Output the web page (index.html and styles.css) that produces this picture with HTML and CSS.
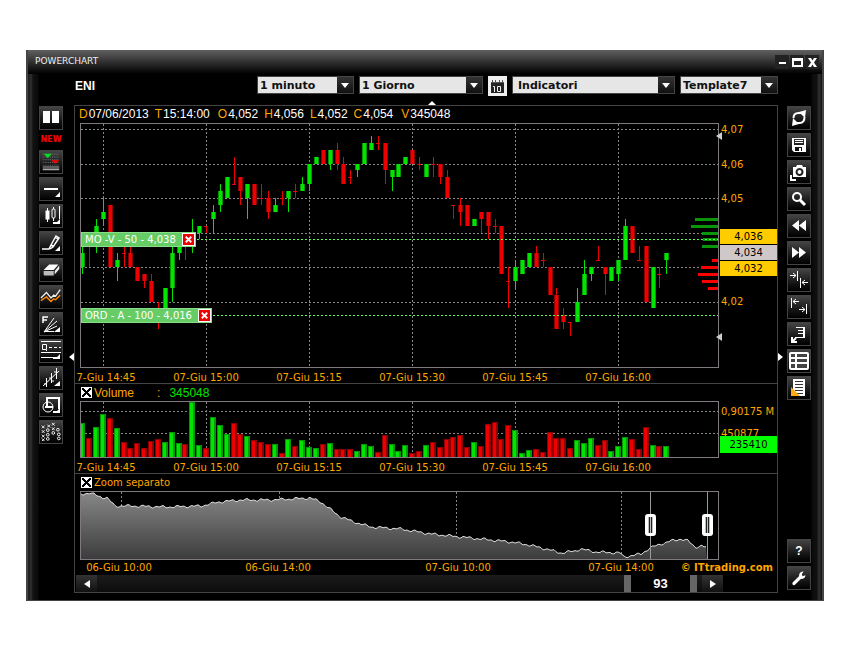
FILE: index.html
```
<!DOCTYPE html>
<html lang="it">
<head>
    <meta charset="UTF-8">
    <title>PowerChart - ENI</title>
    <link rel="stylesheet" href="styles.css">
</head>
<body>
    <div id="window">
        <div class="titlebar">
            <span class="title">POWERCHART</span>
            <div class="winbuttons">
                <button type="button" aria-label="Riduci"><svg viewBox="0 0 14 14"><path d="M4 7h7v2H4z"/></svg></button>
                <button type="button" aria-label="Ingrandisci"><svg viewBox="0 0 14 14"><path fill-rule="evenodd" d="M2 3h11v9H2zM4 6v4h7V6z"/></svg></button>
                <button type="button" aria-label="Chiudi"><svg viewBox="0 0 14 14"><path d="M3 3h3l1.500 2.500L9 3h3L9 7.500 12 12H9L7.500 9.500 6 12H3l3-4.500z"/></svg></button>
            </div>
        </div>

        <div class="main">
            <div class="tools left">
                <button type="button" aria-label="Pausa"><svg viewBox="0 0 22 22"><path fill="#fff" d="M3 4h7v12H3zM12 4h7v12h-7z"/></svg></button>
                <span class="new">NEW</span>
                <button type="button" aria-label="Segnali"><svg viewBox="0 0 24 24"><g stroke="#777" stroke-dasharray="1 1"><path d="M3 3.500h18M3 6.500h18M3 9.500h18M3 12.500h18M3 15.500h18"/></g><path fill="#0d2" d="M4 3h9l-4.500 5z"/><path fill="#f00" d="M12 10h9l-4.500 4z"/><path fill="#aaa" d="M3 17h18v1H3zM3 19h18v2H3z"/></svg></button>
                <button type="button" aria-label="Linea"><svg viewBox="0 0 22 22"><path fill="#fff" d="M4 10h14v2H4zM20 14v5h-5z"/></svg></button>
                <button type="button" aria-label="Tipo grafico"><svg viewBox="0 0 22 22" class="line"><path d="M7.500 3v3M7.500 14v3M13.500 2v2M13.500 13v3M19.500 1v13"/><rect x="6" y="6" width="3" height="8" fill="#fff"/><rect x="12" y="4" width="3" height="9" rx="1"/><path class="fill" d="M20 14v5h-7v-2h4z"/></svg></button>
                <button type="button" aria-label="Disegna"><svg viewBox="0 0 22 22" class="line"><path stroke-width="1.500" d="M2 17h7l2-4 5-9 3 2-6 9-3 2M11 13l2 1M15 5l3 2"/><path class="fill" d="M20 14v5h-5z"/></svg></button>
                <button type="button" aria-label="Cancella"><svg viewBox="0 0 24 24"><path fill="#fff" d="M4 12l6-6h10l-5 6z"/><path fill="#bbb" d="M4 13h11v5H5q-1 0-1-1z"/><path fill="#eee" d="M16 13l5-6v4l-5 6z"/></svg></button>
                <button type="button" aria-label="Indicatore"><svg viewBox="0 0 24 24" fill="none" stroke-width="1.500"><path stroke="#eee" d="M1 13l6-6 5 6 3-3 2 1 5-7"/><path stroke="#f80" d="M1 16l6-4 5 5 3-3 2 1 5-5"/></svg></button>
                <button type="button" aria-label="Fibonacci"><svg viewBox="0 0 22 22" class="line"><path stroke-width="1.500" d="M3 10V4h5M3 7h4"/><path d="M4 19L14 5M4 19L17 8M4 19l13-6M4 18.500h10"/><path class="fill" d="M20 14v5h-6z"/></svg></button>
                <button type="button" aria-label="Quota"><svg viewBox="0 0 22 22" class="line"><path d="M1 1.500h20M2.500 4.500h4v5h-4zM5 9l2 2M9 7.500h3M14 7.500h3M19 7.500h2M1 12.500h20M1 17.500h13"/><path class="fill" d="M20 14v5h-7v-2h4z"/></svg></button>
                <button type="button" aria-label="Barre"><svg viewBox="0 0 22 22" class="line"><path d="M3 19L19 4M6.500 11v9M4 17h2M11.500 6v10M9 11h2M12 14h2M16.500 1v11M14 5h2"/><path class="fill" d="M20 14v5h-6z"/></svg></button>
                <button type="button" aria-label="Forme"><svg viewBox="0 0 22 22" class="line"><circle cx="8" cy="13" r="5"/><path stroke-width="2" d="M7 13V4h12v11M5 13h8"/><path class="fill" d="M20 14v5h-7v-2h4z"/></svg></button>
                <button type="button" aria-label="Punto e figura"><svg viewBox="0 0 24 24" class="line"><path d="M2 5l3 3m0-3L2 8M2 10l3 3m0-3l-3 3M2 15l3 3m0-3l-3 3M2 19l3 3m0-3l-3 3M8 4l3 3m0-3L8 7M13 2l3 3m0-3l-3 3M13 7l3 3m0-3l-3 3"/><circle cx="8.500" cy="10" r="1.500"/><circle cx="8.500" cy="15" r="1.500"/><circle cx="8.500" cy="19.500" r="1.500"/><circle cx="14.500" cy="13" r="1.500"/><circle cx="19.500" cy="9.500" r="1.500"/><circle cx="20.500" cy="14.500" r="1.500"/><circle cx="20.500" cy="19" r="1.500"/></svg></button>
            </div>

            <div class="center">
                <form class="selectors">
                    <h1>ENI</h1>
                    <span class="select minute"><select aria-label="Intervallo"><option>1 minuto</option></select></span>
                    <span class="select day"><select aria-label="Periodo"><option>1 Giorno</option></select></span>
                    <button type="button" class="calendar" aria-label="Calendario"><svg viewBox="0 0 19 20"><path fill="#222" d="M3 7h13v10H3z"/><path fill="#555" d="M4 4h1v2H4zM7 4h1v2H7zM11 4h1v2h-1zM14 4h1v2h-1zM3 6h13v1H3z"/><path fill="none" stroke="#eee" d="M5 10.500h1.500V16M9.500 10.500h3v5h-3z"/></svg></button>
                    <span class="select indicators"><select aria-label="Indicatori"><option>Indicatori</option></select></span>
                    <span class="select template"><select aria-label="Template"><option>Template7</option></select></span>
                </form>

                <div class="charts">
                    <i class="arrow up"></i><i class="arrow prev"></i><i class="arrow next"></i>

                    <div class="quote">
                        <span><b>D</b>07/06/2013</span>
                        <span><b>T</b>15:14:00</span>
                        <span class="wide"><b>O</b>4,052</span>
                        <span><b>H</b>4,056</span>
                        <span><b>L</b>4,052</span>
                        <span><b>C</b>4,054</span>
                        <span class="wide"><b>V</b>345048</span>
                    </div>
                    <div class="row">
                        <div class="plot price">
                            <svg id="price" viewBox="0 0 637 243" preserveAspectRatio="none"></svg>
                            <div class="order first">MO -V - 50 - 4,038<button type="button" aria-label="Elimina ordine"><svg viewBox="0 0 12 12"><path d="M3 3l6 6M9 3l-6 6"/></svg></button></div>
                            <div class="order second">ORD - A - 100 - 4,016<button type="button" aria-label="Elimina ordine"><svg viewBox="0 0 12 12"><path d="M3 3l6 6M9 3l-6 6"/></svg></button></div>
                            <i class="mark high"></i><i class="mark low"></i>
                        </div>
                        <div class="axis" id="priceAxis">
                            <div class="levels">
                                <span>4,036</span>
                                <span class="last">4,034</span>
                                <span>4,032</span>
                            </div>
                        </div>
                    </div>
                    <div class="times minutes"></div>

                    <div class="head">
                        <input type="checkbox" id="showVolume" checked><label for="showVolume">Volume</label>
                        <span class="colon">:</span><span class="value">345048</span>
                    </div>
                    <div class="row">
                        <div class="plot volume"><svg id="volume" viewBox="0 0 637 55" preserveAspectRatio="none"></svg></div>
                        <div class="axis" id="volumeAxis"><span class="current">235410</span></div>
                    </div>
                    <div class="times minutes"></div>

                    <div class="head small">
                        <input type="checkbox" id="showZoom" checked><label for="showZoom">Zoom separato</label>
                    </div>
                    <div class="row">
                        <div class="plot zoom">
                            <svg id="zoom" viewBox="0 0 637 67" preserveAspectRatio="none"></svg>
                            <i class="handle from"></i><i class="handle to"></i>
                        </div>
                        <div class="axis"></div>
                    </div>
                    <div class="times hours"><strong>© ITtrading.com</strong></div>

                    <div class="scroll">
                        <button type="button" class="back" aria-label="Indietro"></button>
                        <div class="track"><div class="thumb">93</div></div>
                        <button type="button" class="forward" aria-label="Avanti"></button>
                    </div>
                </div>
            </div>

            <div class="tools right">
                <button type="button" aria-label="Aggiorna"><svg viewBox="0 0 22 22" class="line thick"><path d="M5.500 11q0-5 5-5h3M16.500 10q0 6-5 6h-3"/><path class="fill" d="M11 5l7-2-1 8zM11 17l-7 2 1-8z"/></svg></button>
                <button type="button" aria-label="Salva"><svg viewBox="0 0 22 22"><path fill="#fff" fill-rule="evenodd" d="M4 4h14v14H6l-2-2zM6 5v6h10V5zM7 13v4h7v-4z"/><path fill="#fff" d="M7 6h8v1H7zM7 8h8v1H7zM11 14h2v3h-2z"/></svg></button>
                <button type="button" aria-label="Fotografia"><svg viewBox="0 0 22 22"><path fill="#fff" fill-rule="evenodd" d="M5 6h3l1-2h5l1 2h3v10H5zM11.500 7a4 4 0 1 0 .1 0z"/><circle cx="11.500" cy="11" r="2" fill="#fff"/><path fill="#fff" d="M2 14h2v4h4v2H2z"/></svg></button>
                <button type="button" aria-label="Zoom"><svg viewBox="0 0 22 22" class="line thick"><circle cx="9" cy="9" r="4"/><path stroke-width="3" d="M12 12l5 5"/></svg></button>
                <button type="button" aria-label="Indietro"><svg viewBox="0 0 22 22"><path fill="#fff" d="M11 5v11l-7-5.500zM18 5v11l-7-5.500z"/></svg></button>
                <button type="button" aria-label="Avanti"><svg viewBox="0 0 22 22"><path fill="#fff" d="M4 5v11l7-5.500zM11 5v11l7-5.500z"/></svg></button>
                <button type="button" aria-label="Comprimi"><svg viewBox="0 0 22 22" class="line"><path d="M9.500 2v10M12.500 9v10M2 6.500h6M5 4l3 2.500L5 9M20 13.500h-6M17 11l-3 2.500 3 2.500"/></svg></button>
                <button type="button" aria-label="Espandi"><svg viewBox="0 0 22 22" class="line"><path d="M3.500 2v10M18.500 8v10M11 5.500H5M8 3L5 5.500 8 8M11 13.500h6M14 11l3 2.500-3 2.500"/></svg></button>
                <button type="button" aria-label="Esporta"><svg viewBox="0 0 22 22" class="line"><path d="M8 4.500h9M10 7.500h7M10 10.500h7M7 14.500h10"/><path stroke-width="2" d="M16 4v11M4 14v5h5M4 19l4-4"/></svg></button>
                <button type="button" aria-label="Tabella"><svg viewBox="0 0 22 22"><rect x="1" y="2" width="20" height="18" rx="2" fill="#fff"/><path fill="#444" d="M3 4h4v3H3zM9 4h10v3H9zM3 9h4v3H3zM9 9h10v3H9zM3 14h4v4H3zM9 14h10v4H9z"/></svg></button>
                <button type="button" aria-label="Elenco"><svg viewBox="0 0 22 22"><path fill="#fff" d="M5 2h12v17H5z"/><path stroke="#333" d="M7 4.500h8M7 7.500h8M7 10.500h8M7 13.500h8M7 16.500h8"/><path fill="#fa1" d="M3 10l9 9H3z"/></svg></button>
                <button type="button" class="help" aria-label="Aiuto">?</button>
                <button type="button" aria-label="Impostazioni"><svg viewBox="0 0 24 24"><path fill="#fff" d="M5 17l7-7q0-5 5-5l-2 3 1 2 3-1q0 4-5 4l-7 7q-3 0-2-3z"/></svg></button>
            </div>
        </div>
    </div>
    <script src="chart.js"></script>
</body>
</html>
```
FILE: styles.css
```
*,
*::before,
*::after {
    margin: 0px;
    padding: 0px;
    box-sizing: border-box;
}
body {
    padding: 50px 26px;
    background: #fff;
    font-family: "DejaVu Sans", Verdana, sans-serif;
    font-size: 10px;
    color: #ffa500;
}
button {
    border: 0;
    color: #fff;
    cursor: pointer;
}
svg {
    display: block;
}
#window {
    min-width: 720px;
    padding-bottom: 7px;
    border: 1px solid #444;
    border-width: 0 2px 1px;
    background: linear-gradient(90deg, #222 0, #222 2px, #333 3px, #111 5px, #0a0a0a 10px, #000 11px, #000 calc(100% - 11px), #0a0a0a calc(100% - 10px), #111 calc(100% - 5px), #333 calc(100% - 3px), #111 100%);
}
.titlebar {
    display: flex;
    justify-content: space-between;
    height: 24px;
    padding: 0 3px 0 7px;
    background: linear-gradient(#606060, #303030 50%, #000);
}
.title {
    font-size: 9px;
    line-height: 23px;
    color: #eee;
}
.winbuttons {
    display: flex;
    gap: 1px;
    padding-top: 5px;
}
.winbuttons button {
    width: 14px;
    height: 14px;
    background: #222;
}
.winbuttons svg {
    width: 14px;
    height: 14px;
    fill: #fff;
}
.main {
    display: flex;
    padding: 0 11px;
}

/* toolbars */
.tools {
    display: flex;
    flex: none;
    flex-direction: column;
    gap: 3px;
    width: 24px;
    padding: 32px 0 3px;
}
.tools button {
    width: 24px;
    height: 24px;
    border: 1px solid #444;
    background: linear-gradient(#444, #111 70%, #000);
}
.tools svg {
    width: 22px;
    height: 22px;
}
.new {
    height: 14px;
    font-size: 8px;
    font-weight: bold;
    line-height: 14px;
    text-align: center;
    color: #f00;
}
.line {
    fill: none;
    stroke: #fff;
}
.thick {
    stroke-width: 2px;
}
.fill {
    fill: #fff;
    stroke: none;
}
.tools .help {
    margin-top: auto;
    font-size: 12px;
    font-weight: bold;
}

/* selectors */
.center {
    flex: 1;
    min-width: 0;
    margin: 0 9px 0 11px;
}
.selectors {
    display: flex;
    align-items: flex-start;
    gap: 5px;
    height: 31px;
    padding-top: 2px;
}
.selectors h1 {
    flex: 1;
    padding-left: 1px;
    font-family: "Liberation Sans", Arial, sans-serif;
    font-size: 12px;
    line-height: 20px;
    color: #fff;
}
.select {
    position: relative;
    height: 18px;
    border: 1px solid #444;
}
.select select {
    display: block;
    width: 100%;
    height: 16px;
    padding-left: 2px;
    border: 0;
    border-radius: 0;
    background: #e6e6e6;
    font-family: "DejaVu Sans", Verdana, sans-serif;
    font-size: 11px;
    font-weight: bold;
    color: #111;
    appearance: none;
}
.select::before {
    content: "";
    position: absolute;
    top: 0;
    right: 0;
    width: 16px;
    height: 16px;
    background: linear-gradient(#333, #111);
    pointer-events: none;
}
.select::after {
    content: "";
    position: absolute;
    top: 6px;
    right: 4px;
    border: 4px solid transparent;
    border-top: 5px solid #fff;
    border-bottom: 0;
    pointer-events: none;
}
.minute {
    width: 97px;
}
.day {
    width: 124px;
}
.indicators {
    width: 163px;
}
.indicators select {
    padding-left: 5px;
}
.template {
    width: 98px;
}
.calendar {
    width: 19px;
    height: 20px;
    background: #eee;
}

/* charts */
.charts {
    position: relative;
    border: 1px solid #444;
    background: #000;
}
.quote {
    display: flex;
    gap: 6px;
    height: 17px;
    padding-left: 4px;
    font-family: "Liberation Sans", Arial, sans-serif;
    font-size: 12px;
    line-height: 17px;
    color: #fff;
}
.quote b {
    margin-right: 1px;
    font-weight: normal;
    color: #ffa500;
}
.quote .wide {
    margin-left: 2px;
}
.row {
    display: flex;
    padding-left: 5px;
}
.plot {
    position: relative;
    flex: 1;
    border: 1px solid #807a80;
}
.plot > svg {
    width: 100%;
    height: 100%;
}
.price {
    height: 245px;
}
.volume {
    height: 57px;
}
.zoom {
    height: 69px;
}
.axis {
    position: relative;
    width: 58px;
}
.label {
    position: absolute;
    left: 2px;
    line-height: 12px;
    white-space: nowrap;
    transform: translateY(-50%);
}
.levels {
    position: absolute;
    top: 106px;
    right: 0;
    left: 1px;
    z-index: 1;
    display: grid;
    gap: 1px;
}
.levels span,
.current {
    height: 15px;
    background: #ffcc00;
    line-height: 15px;
    text-align: center;
    color: #000;
}
.levels .last {
    background: #d0c8c8;
}
.current {
    position: absolute;
    top: 35px;
    right: 0;
    left: 1px;
    z-index: 1;
    height: 17px;
    background: #00ff00;
    line-height: 17px;
}
.times {
    position: relative;
    height: 15px;
}
.minutes {
    height: 16px;
    border-bottom: 1px solid #444;
}
.times div {
    position: absolute;
    top: 0;
    right: 59px;
    bottom: 0;
    left: 6px;
}
.times span {
    position: absolute;
    top: 4px;
    line-height: 12px;
    white-space: nowrap;
    transform: translateX(-50%);
}
.hours span {
    top: 2px;
}
.times strong {
    position: absolute;
    top: 1px;
    right: 4px;
    line-height: 13px;
}
.head {
    display: flex;
    align-items: center;
    height: 17px;
    padding-left: 6px;
    font-family: "Liberation Sans", Arial, sans-serif;
    font-size: 12px;
}
.small {
    font-family: "DejaVu Sans", Verdana, sans-serif;
    font-size: 10px;
}
.head input {
    width: 11px;
    height: 11px;
    margin-right: 2px;
    border: 1px solid #fff;
    background: #fff;
    appearance: none;
}
.head input:checked {
    background: linear-gradient(45deg, transparent 44%, #000 44%, #000 56%, transparent 56%), linear-gradient(-45deg, transparent 44%, #000 44%, #000 56%, transparent 56%), #fff;
}
.colon {
    margin: 0 9px 0 23px;
}
.value {
    color: #00e400;
}

/* orders */
.order {
    position: absolute;
    left: 0;
    display: flex;
    align-items: center;
    gap: 6px;
    height: 15px;
    padding-left: 3px;
    border: 1px solid #8d8;
    background: #66cc66;
    line-height: 13px;
    white-space: nowrap;
    color: #fff;
}
.first {
    top: 108px;
}
.second {
    top: 184px;
}
.order button {
    width: 13px;
    height: 13px;
    border: 1px solid #fff;
    background: #e00;
}
.order svg {
    width: 11px;
    height: 11px;
    stroke: #fff;
    stroke-width: 2px;
}
.mark,
.arrow {
    position: absolute;
    border: 4px solid transparent;
}
.mark {
    right: -4px;
    border-right: 6px solid #ccc;
    border-left: 0;
}
.high {
    top: 8px;
}
.low {
    top: 209px;
}
.up {
    top: -5px;
    left: 353px;
    border-bottom: 4px solid #fff;
    border-top: 0;
}
.prev {
    top: 247px;
    left: -6px;
    border-right: 5px solid #fff;
    border-left: 0;
}
.next {
    top: 247px;
    right: -6px;
    border-right: 0;
    border-left: 5px solid #fff;
}
.handle {
    position: absolute;
    top: 0;
    bottom: 0;
    width: 1px;
    background: #999;
}
.handle::after {
    content: "";
    position: absolute;
    top: 22px;
    left: -5px;
    width: 11px;
    height: 22px;
    border: 3px solid #fff;
    border-radius: 3px;
    background: linear-gradient(90deg, #bbb 1px, #222 1px, #222 2px, #bbb 2px, #bbb 3px, #222 3px, #222 4px, #bbb 4px) padding-box;
}
.from {
    left: 89.3%;
}
.to {
    left: 98.3%;
}

/* scrollbar */
.scroll {
    display: flex;
    height: 17px;
    padding: 0 54px 0 1px;
    background: #000;
}
.scroll button {
    display: flex;
    align-items: center;
    justify-content: center;
    width: 21px;
    background: linear-gradient(#333, #111);
}
.scroll button::after {
    content: "";
    border: 4px solid transparent;
}
.scroll .back::after {
    border-right: 6px solid #fff;
    border-left: 0;
}
.scroll .forward::after {
    border-right: 0;
    border-left: 6px solid #fff;
}
.track {
    flex: 1;
    padding-right: 5px;
    background: linear-gradient(#1c1c1c, #0c0c0c);
}
.thumb {
    width: 73px;
    height: 17px;
    margin-left: auto;
    border: 0 solid #666;
    border-width: 0 7px;
    background: #000;
    font-family: "Liberation Sans", Arial, sans-serif;
    font-size: 13px;
    font-weight: bold;
    line-height: 17px;
    text-align: center;
    color: #fff;
}
```
FILE: chart.js
```
// colore, massimo, inizio corpo, fine corpo, minimo (in tick da 0,002 sotto 4,070), volume
var candles = [
    'g 16 18 20 21 34', 'r 16 16 16 20 19', 'g 13 14 16 18 30', 'g 10 12 13 14 43', 'r 11 11 20 20 39',
    'g 18 19 20 22 29', 'r 16 18 18 20 15', 'r 16 18 20 20 9', 'r 20 20 22 22 14', 'r 21 21 22 23 9',
    'r 21 22 25 25 16', 'r 25 26 26 29 18', 'g 23 23 26 26 15', 'g 16 18 23 25 25', 'g 16 17 18 19 14',
    'r 17 17 17 19 13', 'g 13 16 17 18 55', 'g 14 14 15 16 12', 'r 14 14 14 15 9', 'g 11 12 13 15 40',
    'g 8 9 11 12 32', 'g 7 7 10 10 23', 'r 4 8 8 8 34', 'r 7 7 9 11 23', 'g 8 8 10 13 21',
    'r 8 8 11 11 17', 'r 8 10 10 11 15', 'r 9 10 12 13 13', 'g 10 11 12 12 13', 'r 9 10 10 11 4',
    'g 9 9 10 12 18', 'r 8 9 9 10 11', 'g 7 8 9 9 17', 'g 5 5 8 9 10', 'g 4 4 5 5 9',
    'r 3 3 5 5 13', 'g 3 3 5 6 14', 'r 2 3 5 6 8', 'r 4 5 8 8 8', 'r 6 7 7 8 8',
    'g 5 5 6 7 6', 'g 2 2 5 5 13', 'g 1 2 3 3 11', 'r 1 2 2 3 5', 'r 2 2 6 8 22',
    'g 6 6 7 9 13', 'g 5 5 7 7 6', 'g 4 4 5 5 12', 'r 3 3 5 5 4', 'r 4 5 5 6 6',
    'g 5 5 7 7 12', 'r 4 5 5 7 15', 'r 5 5 7 8 10', 'r 6 7 10 10 18', 'r 11 11 11 13 20',
    'r 10 11 12 14 22', 'r 11 11 14 14 10', 'g 13 13 14 14 15', 'r 12 12 13 15 11', 'r 12 12 14 16 33',
    'r 13 14 14 15 35', 'r 14 14 21 21 18', 'r 20 22 22 26 32', 'g 19 20 22 23 27', 'g 19 19 21 21 4',
    'g 18 18 20 20 7', 'r 17 18 20 20 8', 'r 18 19 19 20 5', 'r 20 20 24 24 25', 'r 23 24 29 29 19',
    'r 26 27 28 29 19', 'r 28 28 28 30 9', 'g 23 25 28 28 17', 'g 19 21 24 24 14', 'g 20 20 21 22 19',
    'r 17 19 19 19 12', 'r 20 20 21 24 17', 'g 20 20 22 22 6', 'g 19 19 21 22 11', 'g 13 14 19 19 20',
    'r 14 14 18 18 18', 'r 17 19 19 19 8', 'r 17 17 25 25 30', 'g 20 20 26 26 12', 'r 20 21 21 23 11',
    'g 18 18 19 21 11'
];
// profondita' del book: tick, larghezza, colore
var depth = [
    [13, 23, '#0a960a'], [14, 27, '#0a960a'], [15, 16, '#0a960a'], [16, 15, '#0a960a'], [17, 16, '#0a960a'],
    [19, 6, '#f00'], [20, 17, '#f00'], [21, 20, '#f00'], [22, 16, '#f00'], [23, 10, '#f00']
];
var trend = [
    [0, 2], [9, 1], [20, 5], [26, 6], [34, 14], [50, 14], [85, 15], [120, 14], [138, 10], [160, 8], [190, 8],
    [229, 6], [240, 10], [258, 24], [270, 29], [290, 35], [320, 37], [350, 42], [380, 45], [410, 48],
    [430, 50], [448, 53], [465, 57], [480, 61], [494, 59], [499, 57], [515, 60], [539, 61], [543, 65],
    [560, 62], [569, 56], [580, 52], [590, 49], [600, 47], [607, 49], [614, 55], [621, 54], [626, 56]
];
var bright = {g: '#00e400', r: '#ee0000'};
var dark = {g: '#009a00', r: '#900000'};

function xPos(i) {
    return Math.round(22 + (i - 3) * 6.87);
}
function yPos(tick) {
    return Math.round(5 + tick * 6.9);
}
function rect(x, y, w, h, color) {
    return '<rect x="' + x + '" y="' + y + '" width="' + w + '" height="' + h + '" fill="' + color + '"/>';
}
function dashed(x1, y1, x2, y2, color) {
    return '<path d="M' + x1 + ' ' + y1 + 'L' + x2 + ' ' + y2 + '" stroke="' + color + '" stroke-dasharray="2 2"/>';
}
function grid(rows, cols, h) {
    var s = '';
    rows.forEach(function (y) { s += dashed(0, y + 0.5, 637, y + 0.5, '#888'); });
    cols.forEach(function (x) { s += dashed(x + 0.5, 0, x + 0.5, h, '#888'); });
    return s;
}
function draw(id, content) {
    document.getElementById(id).innerHTML = '<g shape-rendering="crispEdges">' + content + '</g>';
}

var quarters = [3, 18, 33, 48, 63, 78];
var cols = quarters.map(xPos);
var price = grid([0, 5, 10, 15, 20, 25].map(yPos), cols, 243);
var volume = grid([9, 31], cols, 55);

candles.forEach(function (row, i) {
    var c = row.split(' ');
    var x = xPos(i);
    var top = yPos(+c[2]);
    var height = yPos(+c[3]) - top;
    price += rect(x, yPos(+c[1]), 1, yPos(+c[4]) - yPos(+c[1]), bright[c[0]]);
    if (height == 0) {
        price += rect(x - 2, top, 4, 1, bright[c[0]]);
    } else {
        price += rect(x - 2, top, 5, height, dark[c[0]]) + rect(x - 1, top, 3, height, bright[c[0]]);
    }
    volume += rect(x - 3, 55 - c[5], 6, +c[5], dark[c[0]]) + rect(x - 2, 56 - c[5], 3, c[5] - 1, bright[c[0]]);
});
depth.forEach(function (d) {
    price += rect(637 - d[1], yPos(d[0]) - 1, d[1], 3, d[2]);
});
[16, 27].forEach(function (tick) {
    price += dashed(0, yPos(tick) + 0.5, 637, yPos(tick) + 0.5, '#5f5');
});
draw('price', price);
draw('volume', volume);

// linea dello storico, con piccole oscillazioni tra un punto e l'altro
var line = [];
for (var k = 0; k < trend.length - 1; k++) {
    var a = trend[k], b = trend[k + 1];
    for (var x = a[0]; x < b[0]; x += 2) {
        var y = a[1] + (b[1] - a[1]) * (x - a[0]) / (b[0] - a[0]);
        y += Math.sin(x * 0.9) * 0.8 + Math.sin(x * 0.37) * 0.8;
        line.push(x + ' ' + Math.max(1, y).toFixed(1));
    }
}
document.getElementById('zoom').innerHTML =
    '<defs><linearGradient id="fade" gradientUnits="userSpaceOnUse" x1="0" y1="0" x2="0" y2="67"><stop offset="0" stop-color="#888"/><stop offset="1" stop-color="#3c3c3c"/></linearGradient></defs>' +
    grid([], [40, 198, 375, 540], 67) +
    '<path fill="url(#fade)" d="M0 67L' + line.join('L') + 'L626 67z"/>' +
    '<path fill="none" stroke="#ddd" d="M' + line.join('L') + '"/>';

// etichette degli assi
function axis(id, labels, height) {
    var s = '';
    labels.forEach(function (l) {
        s += '<span class="label" style="top:' + (l[1] / height * 100) + '%">' + l[0] + '</span>';
    });
    document.getElementById(id).insertAdjacentHTML('afterbegin', s);
}
axis('priceAxis', [['4,07', 7], ['4,06', 42], ['4,05', 76], ['4,02', 179]], 245);
axis('volumeAxis', [['0,90175 M', 11], ['450877', 33]], 57);

function times(selector, labels) {
    var html = '<div>';
    labels.forEach(function (l) {
        html += '<span style="left:' + (l[1] / 637 * 100) + '%">' + l[0] + '</span>';
    });
    document.querySelectorAll(selector).forEach(function (el) {
        el.insertAdjacentHTML('afterbegin', html + '</div>');
    });
}
times('.minutes', [
    ['7-Giu 14:45', cols[0] + 3], ['07-Giu 15:00', cols[1]], ['07-Giu 15:15', cols[2]],
    ['07-Giu 15:30', cols[3]], ['07-Giu 15:45', cols[4]], ['07-Giu 16:00', cols[5]]
]);
times('.hours', [['06-Giu 10:00', 38], ['06-Giu 14:00', 197], ['07-Giu 10:00', 377], ['07-Giu 14:00', 540]]);
```
